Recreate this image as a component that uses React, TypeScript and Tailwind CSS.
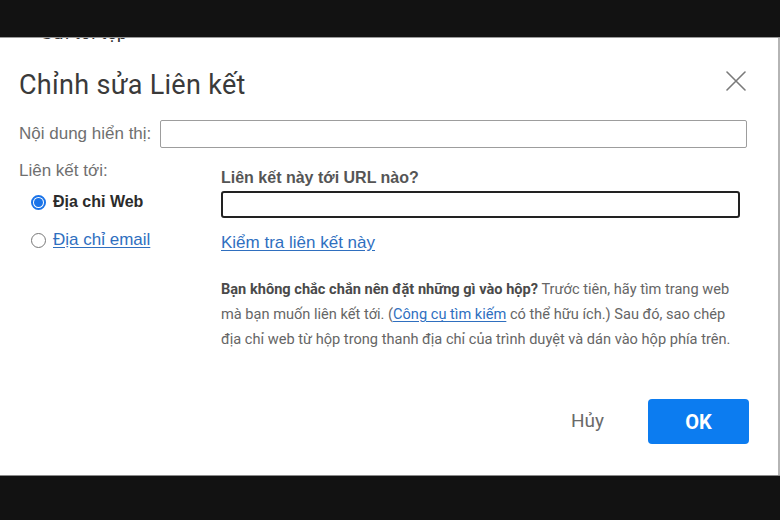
export default function App() {
  return (
    <div className="w-[780px] h-[520px] bg-[#121212] flex flex-col overflow-hidden" style={{ fontFamily: "'Liberation Sans', Arial, sans-serif" }}>
      <div className="h-[38px] shrink-0 border-b border-[#9a9a9a]" />
      <div className="h-[437px] shrink-0 bg-white border-r-2 border-[#b5b5b5] flex flex-col">
        <div className="h-[4px] overflow-hidden pl-[40px]">
          <div className="-mt-[17px] text-[19px] leading-[24px] text-[#333] font-['Roboto']">Gửi tới tệp</div>
        </div>

        <div className="flex items-start justify-between pl-[19px] pr-[32px] pt-[27px]">
          <h1 className="text-[27px] leading-[32px] text-[#3a3a3a] font-['Roboto'] tracking-[0.3px]">Chỉnh sửa Liên kết</h1>
          <button className="mt-[2px]">
            <svg width="20" height="20" viewBox="0 0 20 20" fill="none" stroke="#7a7a7a" strokeWidth="1.6" strokeLinecap="round">
              <path d="M1 1L19 19M19 1L1 19" />
            </svg>
          </button>
        </div>

        <div className="grid grid-cols-[141px_1fr] items-center pl-[19px] pr-[31px] mt-[19px]">
          <span className="text-[17px] text-[#6f6f6f] whitespace-nowrap">Nội dung hiển thị:</span>
          <div className="h-[28px] border border-[#9d9d9d] rounded-[2px]" />
        </div>

        <div className="flex pl-[19px] mt-[13px]">
          <div className="w-[202px] shrink-0">
            <div className="text-[17px] text-[#6f6f6f] leading-[20px]">Liên kết tới:</div>
            <div className="pl-[12px] mt-[11px] flex flex-col gap-[18px]">
              <label className="flex items-center gap-[7px]">
                <span className="w-[15px] h-[15px] rounded-full border-2 border-[#1a73e8] flex items-center justify-center">
                  <span className="w-[9px] h-[9px] rounded-full bg-[#1a73e8]" />
                </span>
                <span className="text-[16px] font-bold text-[#2b2b2b] leading-[20px]">Địa chỉ Web</span>
              </label>
              <label className="flex items-center gap-[7px]">
                <span className="w-[15px] h-[15px] rounded-full border border-[#777]" />
                <span className="text-[17px] text-[#2f6fbf] underline underline-offset-2 leading-[20px]">Địa chỉ email</span>
              </label>
            </div>
          </div>

          <div className="flex-1 pr-[38px] pt-[8px]">
            <div className="text-[16px] font-bold text-[#555] leading-[18px]">Liên kết này tới URL nào?</div>
            <div className="mt-[4px] h-[27px] border-2 border-[#222] rounded-[3px]" />
            <div className="mt-[15px] text-[17px] text-[#2f6fbf] underline underline-offset-2 leading-[20px]">Kiểm tra liên kết này</div>
            <p className="mt-[24px] text-[14.6px] leading-[25px] text-[#666] font-['Roboto']">
              <span className="font-bold text-[#4a4a4a]">Bạn không chắc chắn nên đặt những gì vào hộp?</span> Trước tiên, hãy tìm trang web mà bạn muốn liên kết tới. (<span className="text-[#2f6fbf] underline underline-offset-2">Công cụ tìm kiếm</span> có thể hữu ích.) Sau đó, sao chép địa chỉ web từ hộp trong thanh địa chỉ của trình duyệt và dán vào hộp phía trên.
            </p>
          </div>
        </div>

        <div className="mt-auto mb-[31px] flex items-center justify-end pr-[29px]">
          <button className="text-[19px] text-[#6a6a6a] font-['Roboto'] mr-[44px]">Hủy</button>
          <button className="w-[101px] h-[45px] rounded-[4px] bg-[#0c7cf0] text-white text-[20px] font-bold font-['Roboto']">OK</button>
        </div>
      </div>
      <div className="flex-1 border-t border-[#8a8a8a]" />
    </div>
  );
}
